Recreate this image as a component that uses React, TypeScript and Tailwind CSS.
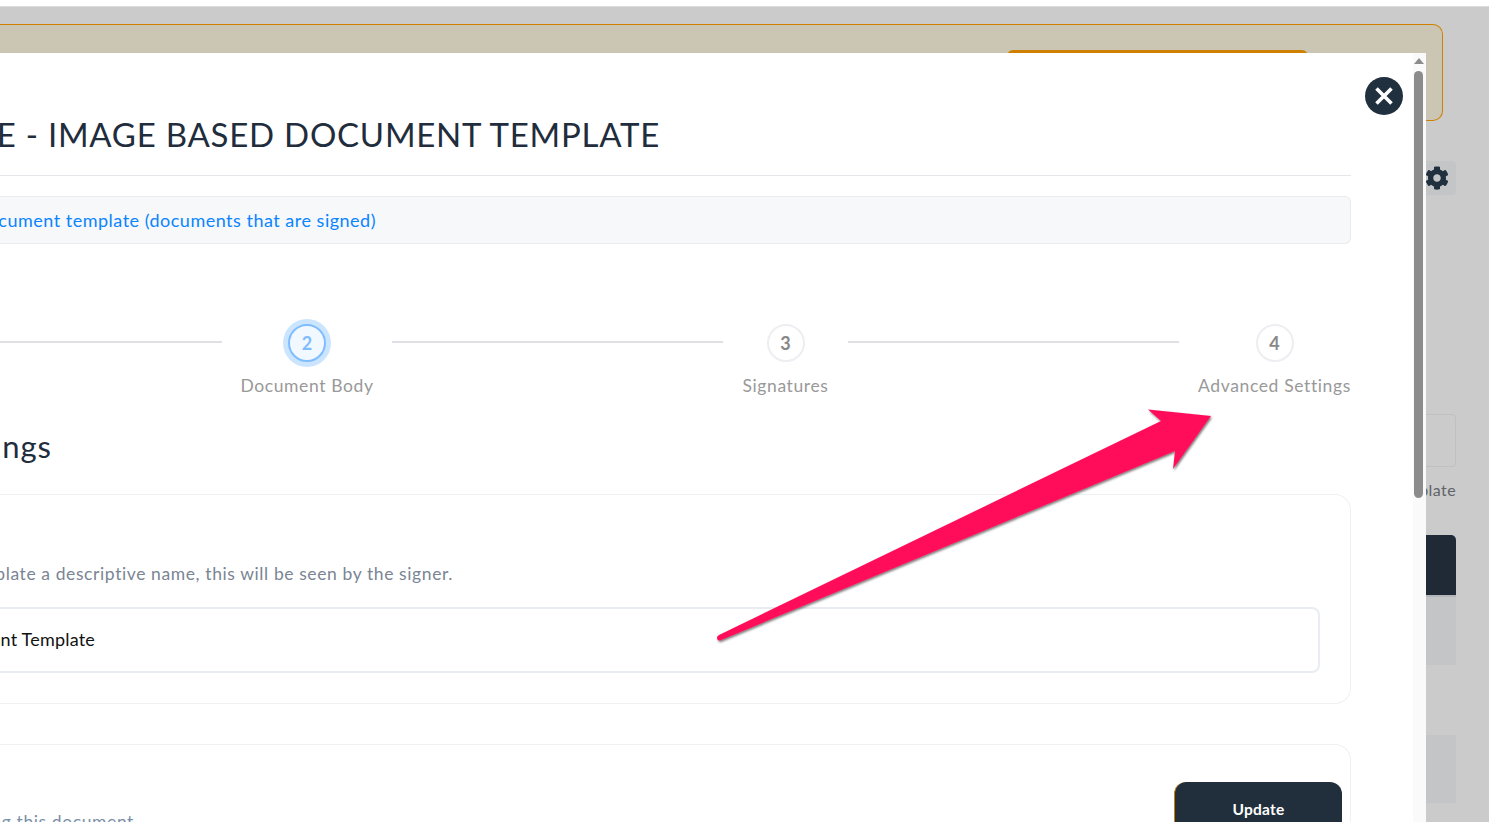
import { FaCog } from 'react-icons/fa'

const font = { fontFamily: '"Lato", "Noto Sans", sans-serif' }

function Step({ n, label, width, active }: { n: number; label: string; width: string; active?: boolean }) {
  return (
    <div className={`${width} flex flex-col items-center shrink-0`}>
      <div className="h-[48px] flex items-center justify-center">
        {active ? (
          <div className="w-[48px] h-[48px] rounded-full bg-[#cce5ff] flex items-center justify-center">
            <div className="w-[38px] h-[38px] rounded-full bg-[#f2f8ff] border-2 border-[#80bdff] flex items-center justify-center text-[18px] font-bold text-[#80bdff]">
              {n}
            </div>
          </div>
        ) : (
          <div className="w-[38px] h-[38px] rounded-full border-2 border-[#eceef1] flex items-center justify-center text-[18px] font-bold text-[#888888]">
            {n}
          </div>
        )}
      </div>
      <div className="mt-[7px] text-[17.5px] leading-[24px] text-[#999999] whitespace-nowrap tracking-[0.62px]">{label}</div>
    </div>
  )
}

function Background() {
  return (
    <div className="w-[1456px] flex flex-col items-end">
      <div className="w-[1443px] self-start h-[97px] mt-[17px] bg-[#cbc5b3] border border-l-0 border-[#d08000] rounded-r-[10px] flex justify-end pr-[134px] pt-[25px]">
        <div className="w-[301px] h-[50px] bg-[#d08000] rounded-[6px]" />
      </div>
      <div className="mt-[40px] w-[50px] h-[34px] bg-[#c4c5c7] rounded-[4px] flex items-center justify-center">
        <FaCog className="w-[24px] h-[24px] text-[#21303f] relative left-[6px]" />
      </div>
      <div className="mt-[219px] w-[100px] h-[53px] border border-[#bfc0c2] rounded-[4px]" />
      <div className="mt-[13px] text-[16px] leading-[20px] text-[#5f6468] tracking-[0.4px]">Template</div>
      <div className="mt-[35px] w-[100px] h-[60px] bg-[#1f2a36] rounded-t-[5px]" />
      <div className="w-[100px] h-[70px] bg-[#c4c5c7] border-t-2 border-[#b3b6ba]" />
      <div className="mt-[70px] w-[100px] h-[68px] bg-[#c4c5c7]" />
    </div>
  )
}

function Modal() {
  return (
    <div className="absolute left-0 top-[53px] bottom-0 w-[1426px] bg-white overflow-hidden">
      <div className="w-[1351px]">
        <div className="h-[122px] flex items-end justify-end w-[660px] pb-[21px]">
          <h2 className="text-[33px] leading-[40px] text-[#1f2d3d] whitespace-nowrap shrink-0 tracking-[0.75px]">
            UPDATE - IMAGE BASED DOCUMENT TEMPLATE
          </h2>
        </div>
        <div className="h-px bg-[#e4e6e9]" />
        <div className="mt-[20px] h-[48px] bg-[#f6f8fa] border border-[#e8ebef] rounded-r-[6px] border-l-0 flex items-center justify-end pr-[974px]">
          <span className="text-[18px] text-[#0a84ff] whitespace-nowrap shrink-0 tracking-[0.5px]">
            Use this to create a document template (documents that are signed)
          </span>
        </div>

        <div className="mt-[75px] flex items-start">
          <div className="w-[222px] h-[2px] bg-[#dfe0e5] mt-[22px] shrink-0" />
          <Step n={2} label="Document Body" width="w-[170px]" active />
          <div className="w-[331px] h-[2px] bg-[#dfe0e5] mt-[22px] shrink-0" />
          <Step n={3} label="Signatures" width="w-[125px]" />
          <div className="w-[331px] h-[2px] bg-[#dfe0e5] mt-[22px] shrink-0" />
          <Step n={4} label="Advanced Settings" width="w-[191px]" />
        </div>

        <div className="mt-[28px] w-[52px] flex justify-end h-[40px] items-center">
          <h3 className="text-[31px] leading-[40px] text-[#1f2d3d] whitespace-nowrap shrink-0 tracking-[1px]">Settings</h3>
        </div>

        <div className="mt-[28px] h-[210px] border border-[#eef0f2] rounded-r-[16px] border-l-0 pr-[30px] pt-[66px]">
          <div className="w-[453px] flex justify-end h-[26px] items-center">
            <span className="text-[17.5px] text-[#7a8594] whitespace-nowrap shrink-0 tracking-[0.6px]">
              Give your template a descriptive name, this will be seen by the signer.
            </span>
          </div>
          <div className="mt-[20px] h-[66px] border-2 border-[#e9ecf1] border-l-0 rounded-r-[8px] flex items-center pb-[2px]">
            <div className="w-[95px] flex justify-end">
              <span className="text-[18px] text-[#111111] whitespace-nowrap shrink-0 tracking-[0.2px]">Document Template</span>
            </div>
          </div>
        </div>

        <div className="mt-[40px] h-[200px] border border-[#eef0f2] rounded-r-[16px] border-l-0 pr-[8px] pt-[37px] relative">
          <div className="flex justify-between items-start">
            <div className="w-[134px] flex justify-end mt-[27px]">
              <span className="text-[17.5px] text-[#7a8fa8] whitespace-nowrap shrink-0 tracking-[0.6px]">before signing this document</span>
            </div>
            <div className="w-[168px] h-[60px] bg-[#212f3d] rounded-t-[12px] border-l border-[#d08000] flex items-center justify-center text-[15.5px] font-bold text-white pb-[5px] tracking-[0.2px]">
              Update
            </div>
          </div>
        </div>
      </div>

      {/* scrollbar */}
      <div className="absolute right-0 top-0 bottom-0 w-[13px] bg-[#fafafa]">
        <div className="absolute left-[1px] top-[5px] w-0 h-0 border-x-[5px] border-x-transparent border-b-[6px] border-b-[#8c8c8c]" />
        <div className="absolute left-[1px] top-[18px] w-[9px] h-[427px] rounded-full bg-[#8c8c8c]" />
      </div>

      <button className="absolute left-[1365px] top-[24px] w-[38px] h-[38px] rounded-full bg-[#21303f] flex items-center justify-center">
        <svg width="24" height="24" viewBox="0 0 24 24" fill="none" stroke="#ffffff" strokeWidth="3.6">
          <path d="M4.5 4.5 L19.5 19.5 M19.5 4.5 L4.5 19.5" />
        </svg>
      </button>
    </div>
  )
}

export default function App() {
  return (
    <div className="relative w-[1489px] h-[822px] overflow-hidden bg-[#cbcbcb]" style={font}>
      <div className="h-[6px] bg-white" />
      <div className="h-px bg-[#dcdcdc]" />
      <Background />
      <Modal />
      {/* annotation arrow */}
      <svg className="absolute left-0 top-0 pointer-events-none" width="1489" height="822" viewBox="0 0 1489 822">
        <defs>
          <filter id="arrowShadow" x="-5%" y="-5%" width="110%" height="115%">
            <feDropShadow dx="1" dy="1.5" stdDeviation="1" floodColor="#000000" floodOpacity="0.55" />
          </filter>
        </defs>
        <path
          d="M1148 409.5 L1211 416 L1173 469 L1175 451 L720 640.5 Q717 641 717 637.5 Q717 636 719 635 L1161 421 Z"
          fill="#ff0f5a"
          filter="url(#arrowShadow)"
        />
      </svg>
    </div>
  )
}
